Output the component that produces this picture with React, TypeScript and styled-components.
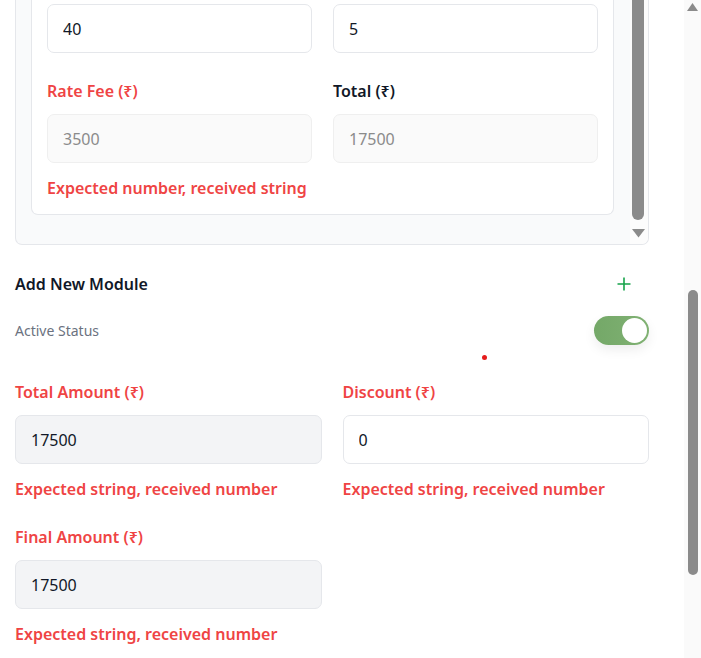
import React from "react";
import styled, { createGlobalStyle } from "styled-components";

const GlobalStyle = createGlobalStyle`
  html, body {
    margin: 0;
    padding: 0;
    overflow: hidden;
    background: #ffffff;
  }
  * { box-sizing: border-box; }
  body {
    font-family: "Noto Sans", "Open Sans", sans-serif;
    color: #111827;
  }
`;

const Viewport = styled.div`
  display: flex;
  width: 701px;
  height: 658px;
  overflow: hidden;
  background: #ffffff;
`;

const Main = styled.div`
  flex: 1;
  display: flex;
  flex-direction: column;
  padding: 0 35px 0 15px;
  position: relative;
`;

const Panel = styled.div`
  display: flex;
  height: 245px;
  background: #f9fafb;
  border: 1px solid #e5e7eb;
  border-top: none;
  border-radius: 0 0 7px 7px;
  overflow: hidden;
`;

const ScrollArea = styled.div`
  flex: 1;
  padding: 0 16px 0 15px;
  overflow: hidden;
`;

const Card = styled.div`
  background: #ffffff;
  border: 1px solid #e5e7eb;
  border-top: none;
  border-radius: 0 0 7px 7px;
  padding: 4px 15px 14px;
`;

const Grid = styled.div<{ $gap: number }>`
  display: grid;
  grid-template-columns: 1fr 1fr;
  column-gap: ${(p) => p.$gap}px;
`;

const Field = styled.div<{ $mt?: number }>`
  display: flex;
  flex-direction: column;
  margin-top: ${(p) => p.$mt ?? 0}px;
`;

const Label = styled.label<{ $error?: boolean }>`
  font-size: 16px;
  line-height: 24px;
  font-weight: 600;
  color: ${(p) => (p.$error ? "#ef4444" : "#111827")};
  margin-bottom: 11px;
`;

type Variant = "plain" | "disabled" | "readonly";

const Input = styled.input<{ $variant: Variant }>`
  height: 49px;
  width: 100%;
  border-radius: 7px;
  padding: 0 15px;
  font-family: "Noto Sans", "Open Sans", sans-serif;
  font-size: 16px;
  outline: none;
  border: 1px solid
    ${(p) => (p.$variant === "disabled" ? "#efefef" : "#e5e7eb")};
  background: ${(p) =>
    p.$variant === "disabled"
      ? "#fafafa"
      : p.$variant === "readonly"
      ? "#f3f4f6"
      : "#ffffff"};
  color: ${(p) => (p.$variant === "disabled" ? "#8b8b8b" : "#111827")};
`;

const ErrorText = styled.div`
  font-size: 16px;
  line-height: 24px;
  font-weight: 600;
  color: #ef4444;
  margin-top: 13px;
`;

const InnerTrack = styled.div`
  width: 18px;
  display: flex;
  flex-direction: column;
  align-items: flex-start;
  padding-left: 2px;
  background: #fcfcfc;
`;

const InnerThumb = styled.div`
  width: 12px;
  height: 220px;
  background: #8b8b8b;
  border-radius: 0 0 6px 6px;
`;

const Arrow = styled.svg<{ $mt: number }>`
  display: block;
  margin-top: ${(p) => p.$mt}px;
`;

const SectionHeader = styled.div`
  display: flex;
  align-items: center;
  justify-content: space-between;
  margin-top: 27px;
  height: 24px;
`;

const Title = styled.h3`
  margin: 0;
  font-size: 16px;
  line-height: 24px;
  font-weight: 600;
  color: #111827;
`;

const PlusButton = styled.button`
  border: none;
  background: transparent;
  padding: 0;
  width: 16px;
  height: 16px;
  margin-right: 17px;
  display: flex;
  align-items: center;
  justify-content: center;
  cursor: pointer;
`;

const StatusRow = styled.div`
  display: flex;
  align-items: center;
  justify-content: space-between;
  margin-top: 20px;
  height: 29px;
`;

const StatusLabel = styled.span`
  font-size: 14px;
  line-height: 20px;
  color: #6b7280;
`;

const Toggle = styled.div<{ $on: boolean }>`
  width: 55px;
  height: 29px;
  border-radius: 15px;
  background: linear-gradient(90deg, #74a868 0%, #80b173 100%);
  display: flex;
  align-items: center;
  justify-content: ${(p) => (p.$on ? "flex-end" : "flex-start")};
  padding: 0 2px;
  box-shadow: 0 5px 12px rgba(0, 0, 0, 0.07);
`;

const Knob = styled.div`
  width: 25px;
  height: 25px;
  border-radius: 50%;
  background: #ffffff;
`;

const Dot = styled.span`
  position: absolute;
  left: 482px;
  top: 355px;
  width: 5px;
  height: 5px;
  border-radius: 50%;
  background: #e51c1c;
`;

const PageTrack = styled.div`
  width: 17px;
  height: 658px;
  background: #fafafa;
  display: flex;
  flex-direction: column;
  align-items: center;
`;

const PageThumb = styled.div`
  width: 10px;
  height: 285px;
  margin-top: 279px;
  background: #8b8b8b;
  border-radius: 5px;
`;

export default function App() {
  return (
    <>
      <GlobalStyle />
      <Viewport>
        <Main>
          <Panel>
            <ScrollArea>
              <Card>
                <Grid $gap={21}>
                  <Input $variant="plain" defaultValue="40" />
                  <Input $variant="plain" defaultValue="5" />
                </Grid>
                <Grid $gap={21}>
                  <Field $mt={26}>
                    <Label $error>Rate Fee (₹)</Label>
                    <Input $variant="disabled" value="3500" disabled readOnly />
                    <ErrorText>Expected number, received string</ErrorText>
                  </Field>
                  <Field $mt={26}>
                    <Label>Total (₹)</Label>
                    <Input $variant="disabled" value="17500" disabled readOnly />
                  </Field>
                </Grid>
              </Card>
            </ScrollArea>
            <InnerTrack>
              <InnerThumb />
              <Arrow $mt={9} width="13" height="9" viewBox="0 0 13 9">
                <polygon points="0,0 13,0 6.5,8.5" fill="#8b8b8b" />
              </Arrow>
            </InnerTrack>
          </Panel>

          <SectionHeader>
            <Title>Add New Module</Title>
            <PlusButton aria-label="Add module">
              <svg width="14" height="14" viewBox="0 0 14 14">
                <path d="M7 0.5v13M0.5 7h13" stroke="#16a34a" strokeWidth="1.6" />
              </svg>
            </PlusButton>
          </SectionHeader>

          <StatusRow>
            <StatusLabel>Active Status</StatusLabel>
            <Toggle $on>
              <Knob />
            </Toggle>
          </StatusRow>

          <Dot />

          <Grid $gap={21}>
            <Field $mt={35}>
              <Label $error>Total Amount (₹)</Label>
              <Input $variant="readonly" value="17500" readOnly />
              <ErrorText>Expected string, received number</ErrorText>
            </Field>
            <Field $mt={35}>
              <Label $error>Discount (₹)</Label>
              <Input $variant="plain" defaultValue="0" />
              <ErrorText>Expected string, received number</ErrorText>
            </Field>
          </Grid>

          <Grid $gap={21}>
            <Field $mt={24}>
              <Label $error>Final Amount (₹)</Label>
              <Input $variant="readonly" value="17500" readOnly />
              <ErrorText>Expected string, received number</ErrorText>
            </Field>
          </Grid>
        </Main>
        <PageTrack>
          <Arrow $mt={3} width="11" height="8" viewBox="0 0 11 8">
            <polygon points="5.5,0 11,8 0,8" fill="#8b8b8b" />
          </Arrow>
          <PageThumb />
        </PageTrack>
      </Viewport>
    </>
  );
}
